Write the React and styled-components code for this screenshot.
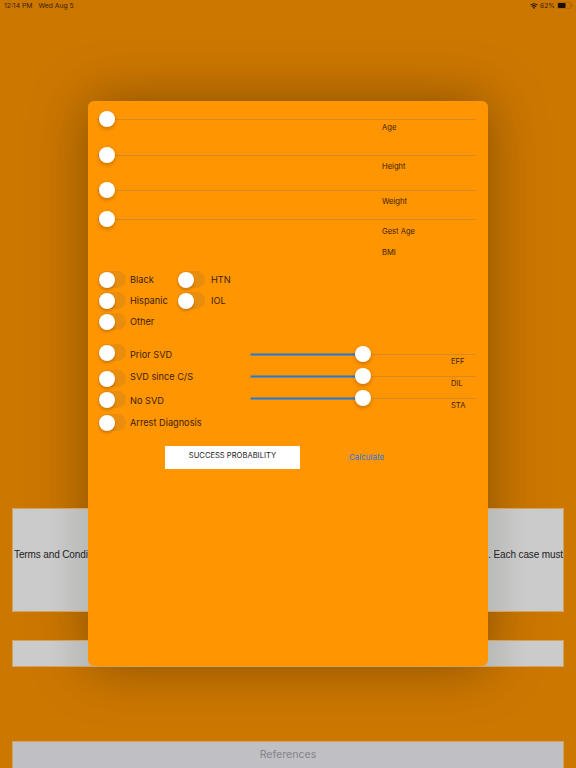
import React from 'react';
import styled, { createGlobalStyle } from 'styled-components';

const GlobalStyle = createGlobalStyle`
  html, body {
    margin: 0;
    padding: 0;
    background: #cc7700;
  }
  * {
    box-sizing: border-box;
  }
`;

const Page = styled.div`
  position: relative;
  display: flex;
  flex-direction: column;
  width: 576px;
  height: 768px;
  overflow: hidden;
  background: #cc7700;
  font-family: Inter, "Liberation Sans", sans-serif;
`;

const StatusBar = styled.div`
  display: flex;
  justify-content: space-between;
  align-items: center;
  height: 11px;
  padding: 0 3px 0 4px;
  font-size: 6.8px;
  color: #3a2200;
`;

const StatusGroup = styled.div`
  display: flex;
  align-items: center;
  gap: ${(p) => p.$gap}px;
`;

const Background = styled.div`
  position: relative;
  flex: 1;
  display: flex;
  flex-direction: column;
  justify-content: flex-end;
  padding: 0 12px;
`;

const Panel = styled.div`
  display: flex;
  justify-content: space-between;
  align-items: center;
  height: ${(p) => p.$height}px;
  margin-bottom: ${(p) => p.$after}px;
  padding: 0 0 12px 1px;
  border: 1px solid #d3a25f;
  background: linear-gradient(
    90deg,
    #cbcbcb 7%,
    #b8bab6 14%,
    #b8bab6 86%,
    #cbcbcb 93%
  );
  color: #222;
  font-family: "Liberation Sans", sans-serif;
  font-size: 10px;
  letter-spacing: -0.12px;
  white-space: nowrap;
`;

const ReferencesBar = styled.div`
  height: 27px;
  border: 1px solid #d3a25f;
  border-bottom-width: 0;
  background: #c0bfc3;
  color: #858488;
  font-size: 10.6px;
  line-height: 26px;
  text-align: center;
`;

const ModalShadow = styled.div`
  position: absolute;
  top: 101px;
  left: 88px;
  width: 400px;
  height: 565px;
  border-radius: 6px;
  box-shadow: 0 0 56px rgba(0, 0, 0, 0.34);
`;

const Modal = styled.div`
  position: absolute;
  top: 101px;
  left: 88px;
  width: 400px;
  height: 565px;
  padding: 18px 12px 0 11px;
  border-radius: 6px;
  background: #ff9500;
  color: #3a2300;
`;

const Measure = styled.div`
  margin-top: ${(p) => p.$top}px;
`;

const Track = styled.div`
  position: relative;
  height: 1px;
  background: rgba(110, 110, 110, 0.28);
`;

const Fill = styled.div`
  height: 100%;
  box-shadow: 0 0 0 0.5px #1c7be0;
  width: ${(p) => p.$value}%;
  background: #1c7be0;
`;

const Thumb = styled.div`
  position: absolute;
  top: -8px;
  left: ${(p) => p.$value}%;
  width: 16px;
  height: 16px;
  margin-left: ${(p) => (p.$value ? -8 : 0)}px;
  border-radius: 50%;
  background: #fff;
  box-shadow: 0 2px 4px rgba(0, 0, 0, 0.22);
`;

const SmallLabel = styled.div`
  height: 12px;
  margin-top: ${(p) => p.$drop || 0}px;
  margin-left: ${(p) => p.$indent}px;
  font-size: 7.6px;
  line-height: 14px;
`;

const ToggleGrid = styled.div`
  display: grid;
  grid-template-columns: 79px 1fr;
  row-gap: 4px;
  margin-top: 13px;
`;

const ToggleRow = styled.div`
  display: flex;
  align-items: center;
  margin-top: ${(p) => p.$top || 0}px;
  gap: ${(p) => p.$gap || 4}px;
  font-size: 9.2px;
`;

const ToggleText = styled.span`
  margin-top: ${(p) => Math.max(p.$nudge, 0) * 2}px;
  margin-bottom: ${(p) => Math.max(-p.$nudge, 0) * 2}px;
`;

const Switch = styled.div`
  position: relative;
  width: 28px;
  height: 17px;
  margin-left: -1px;
  border-radius: 9px;
  background: rgba(110, 100, 90, 0.16);
`;

const Knob = styled.div`
  position: absolute;
  top: 0.5px;
  left: 1px;
  width: 16px;
  height: 16px;
  border-radius: 50%;
  background: #fff;
  box-shadow: 0 2px 3px rgba(0, 0, 0, 0.2);
`;

const History = styled.div`
  display: grid;
  grid-template-columns: 152px 225px;
  margin-top: 14px;
`;

const Column = styled.div`
  display: flex;
  flex-direction: column;
`;

const SliderColumn = styled(Column)`
  gap: 9px;
  padding-top: 10px;
`;

const Actions = styled.div`
  display: flex;
  align-items: center;
  margin: 15px 0 0 66px;
`;

const ResultButton = styled.div`
  width: 135px;
  height: 23px;
  padding-top: 4px;
  background: #fff;
  color: #222;
  font-size: 7.6px;
  line-height: 12px;
  text-align: center;
`;

const CalculateLink = styled.div`
  margin: 0 0 1px 49px;
  color: #1f78e0;
  font-size: 8px;
`;

const Toggle = ({ label, gap, top, nudge = 0 }) => (
  <ToggleRow $gap={gap} $top={top}>
    <Switch>
      <Knob />
    </Switch>
    <ToggleText $nudge={nudge}>{label}</ToggleText>
  </ToggleRow>
);

const Slider = ({ value }) => (
  <Track>
    <Fill $value={value} />
    <Thumb $value={value} />
  </Track>
);

const WifiIcon = () => (
  <svg width="8" height="6" viewBox="0 0 16 12" fill="#2a1800">
    <path d="M8 12 5.6 9.3a3.4 3.4 0 0 1 4.8 0Z" />
    <path d="M4.4 8 3 6.4a7.3 7.3 0 0 1 10 0L11.6 8a5.2 5.2 0 0 0-7.2 0Z" />
    <path d="M1.8 5.2.3 3.5a11.3 11.3 0 0 1 15.4 0l-1.5 1.7a9.1 9.1 0 0 0-12.4 0Z" />
  </svg>
);

const BatteryIcon = () => (
  <svg width="16" height="7" viewBox="0 0 16 7">
    <rect x="0.25" y="0.25" width="13.5" height="6.5" rx="1.6" fill="none" stroke="#8a5600" strokeWidth="0.5" />
    <rect x="1" y="1" width="7.6" height="5" rx="1" fill="#1c1000" />
    <path d="M14.4 2.4c.7.2 1.1.6 1.1 1.1s-.4.9-1.1 1.1Z" fill="#8a5600" />
  </svg>
);

const App = () => (
  <Page>
    <GlobalStyle />
    <ModalShadow />
    <StatusBar>
      <StatusGroup $gap={6}>
        <span>12:14 PM</span>
        <span>Wed Aug 5</span>
      </StatusGroup>
      <StatusGroup $gap={2}>
        <WifiIcon />
        <span>62%</span>
        <BatteryIcon />
      </StatusGroup>
    </StatusBar>

    <Background>
      <Panel $height={104} $after={28}>
        <span>Terms and Conditions</span>
        <span>. Each case must</span>
      </Panel>
      <Panel $height={27} $after={74} />
      <ReferencesBar>References</ReferencesBar>
    </Background>

    <Modal>
      <Measure $top={0}>
        <Slider value={0} />
        <SmallLabel $indent={283} $drop={1}>Age</SmallLabel>
      </Measure>
      <Measure $top={22}>
        <Slider value={0} />
        <SmallLabel $indent={283} $drop={4}>Height</SmallLabel>
      </Measure>
      <Measure $top={18}>
        <Slider value={0} />
        <SmallLabel $indent={283} $drop={4}>Weight</SmallLabel>
      </Measure>
      <Measure $top={12}>
        <Slider value={0} />
        <SmallLabel $indent={283} $drop={5}>Gest Age</SmallLabel>
      </Measure>
      <Measure $top={9}>
        <SmallLabel $indent={283}>BMI</SmallLabel>
      </Measure>

      <ToggleGrid>
        <Toggle label="Black" />
        <Toggle label="HTN" gap={6} />
        <Toggle label="Hispanic" />
        <Toggle label="IOL" gap={6} />
        <Toggle label="Other" />
      </ToggleGrid>

      <History>
        <Column>
          <Toggle label="Prior SVD" nudge={2} />
          <Toggle label="SVD since C/S" top={9} nudge={-2} />
          <Toggle label="No SVD" top={4} nudge={1} />
          <Toggle label="Arrest Diagnosis" top={6} />
        </Column>
        <SliderColumn>
          <div>
            <Slider value={49.7} />
            <SmallLabel $indent={200}>EFF</SmallLabel>
          </div>
          <div>
            <Slider value={49.7} />
            <SmallLabel $indent={200}>DIL</SmallLabel>
          </div>
          <div>
            <Slider value={49.7} />
            <SmallLabel $indent={200}>STA</SmallLabel>
          </div>
        </SliderColumn>
      </History>

      <Actions>
        <ResultButton>SUCCESS PROBABILITY</ResultButton>
        <CalculateLink>Calculate</CalculateLink>
      </Actions>
    </Modal>
  </Page>
);

export default App;
